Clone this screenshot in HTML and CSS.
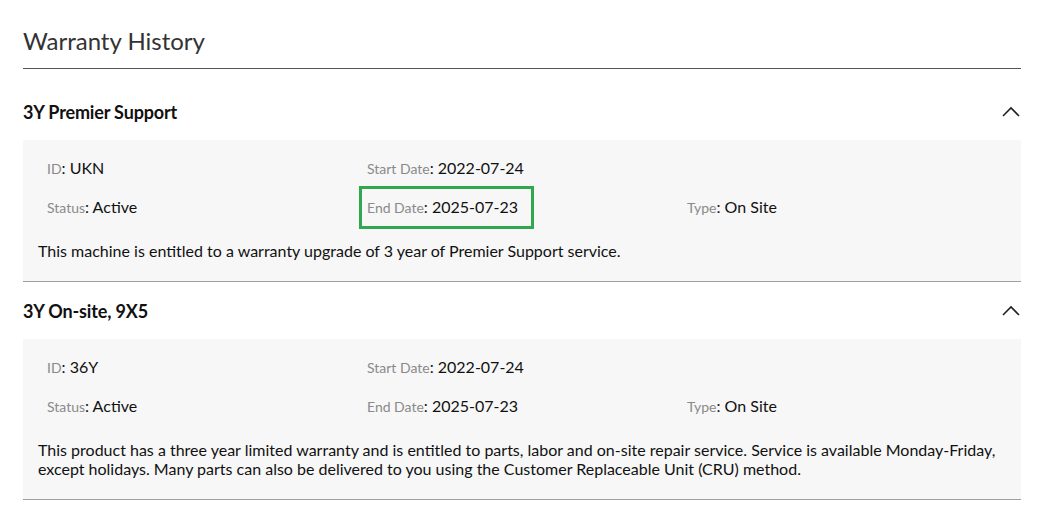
FILE: index.html
```html
<!DOCTYPE html>
<html>
<head>
<meta charset="utf-8">
<link rel="stylesheet" href="styles.css">
</head>
<body>
<div class="page">
  <h1 class="title">Warranty History</h1>
  <div class="list">
    <section class="warranty">
      <div class="w-head">
        <span class="w-name">3Y Premier Support</span>
        <svg class="chev" width="18" height="11" viewBox="0 0 18 11"><polyline points="1,10 9,2 17,10" fill="none" stroke="#222" stroke-width="1.6"/></svg>
      </div>
      <div class="panel">
        <div class="grid">
          <div class="cell"><span class="lbl">ID</span>: UKN</div>
          <div class="cell"><span class="lbl">Start Date</span>: 2022-07-24</div>
          <div class="cell"></div>
          <div class="cell"><span class="lbl">Status</span>: Active</div>
          <div class="cell"><span class="hl"><span class="lbl">End Date</span>: 2025-07-23</span></div>
          <div class="cell"><span class="lbl">Type</span>: On Site</div>
        </div>
        <p class="desc">This machine is entitled to a warranty upgrade of 3 year of Premier Support service.</p>
      </div>
    </section>
    <section class="warranty">
      <div class="w-head">
        <span class="w-name">3Y On-site, 9X5</span>
        <svg class="chev" width="18" height="11" viewBox="0 0 18 11"><polyline points="1,10 9,2 17,10" fill="none" stroke="#222" stroke-width="1.6"/></svg>
      </div>
      <div class="panel">
        <div class="grid">
          <div class="cell"><span class="lbl">ID</span>: 36Y</div>
          <div class="cell"><span class="lbl">Start Date</span>: 2022-07-24</div>
          <div class="cell"></div>
          <div class="cell"><span class="lbl">Status</span>: Active</div>
          <div class="cell"><span class="lbl">End Date</span>: 2025-07-23</div>
          <div class="cell"><span class="lbl">Type</span>: On Site</div>
        </div>
        <p class="desc">This product has a three year limited warranty and is entitled to parts, labor and on-site repair service. Service is available Monday-Friday, except holidays. Many parts can also be delivered to you using the Customer Replaceable Unit (CRU) method.</p>
      </div>
    </section>
  </div>
</div>
</body>
</html>
```

FILE: styles.css
```css
html, body {
  margin: 0;
  padding: 0;
  background: #fff;
}
body {
  font-family: Lato, "Open Sans", sans-serif;
  color: #111;
}
.page {
  padding: 0 24px 0 23px;
}
.title {
  margin: 0;
  height: 69px;
  box-sizing: border-box;
  padding-top: 26px;
  font-size: 24px;
  line-height: 30px;
  font-weight: 400;
  color: #333;
  border-bottom: 1px solid #555;
}
.list {
  margin-top: 14px;
}
.warranty {
  border-bottom: 1px solid #a0a0a0;
}
.w-head {
  display: flex;
  align-items: center;
  justify-content: space-between;
  padding: 17px 0 16px;
}
.w-name {
  font-size: 18px;
  line-height: 24px;
  font-weight: 700;
  color: #111;
  letter-spacing: -0.15px;
}
.chev {
  margin-right: 1px;
  margin-top: -2px;
}
.panel {
  background: #f7f7f7;
  padding: 17px 0 21px;
}
.grid {
  display: grid;
  grid-template-columns: 320px 320px 1fr;
  row-gap: 16px;
  padding: 0 24px;
}
.cell {
  font-size: 16px;
  line-height: 22px;
  color: #111;
  white-space: nowrap;
}
.lbl {
  font-size: 14px;
  color: #8a8a8a;
}
.hl {
  display: inline-block;
  border: 3px solid #2fa84f;
  padding: 7px 13px 7px 5px;
  margin: -10px -16px -10px -8px;
}
.desc {
  margin: 22px 0 0;
  padding: 0 15px;
  font-size: 16px;
  line-height: 19px;
  color: #111;
}
```
